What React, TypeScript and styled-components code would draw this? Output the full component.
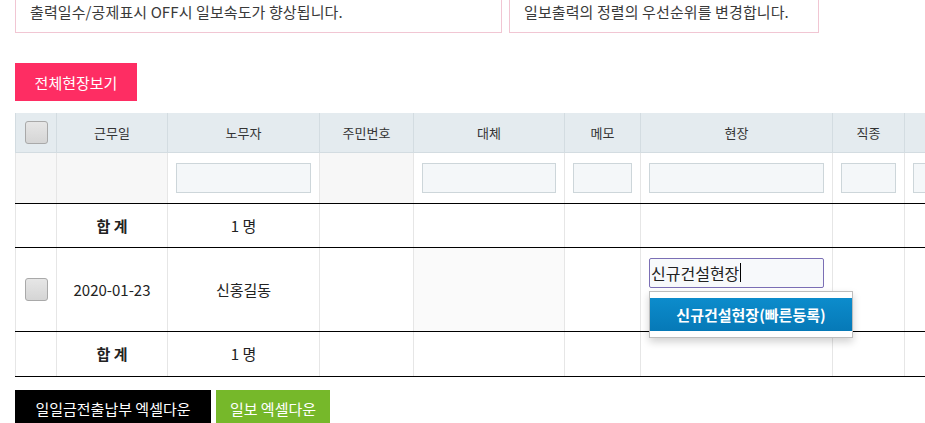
import React from "react";
import styled, { createGlobalStyle } from "styled-components";

const GlobalStyle = createGlobalStyle`
  html, body {
    margin: 0;
    padding: 0;
    background: #ffffff;
    overflow: hidden;
  }
  body {
    font-family: "Noto Sans CJK KR", "Noto Sans", sans-serif;
    color: #333333;
  }
  * { box-sizing: border-box; }
`;

const Page = styled.div`
  padding: 0 0 0 15px;
  width: 1200px;
`;

const NoticeRow = styled.div`
  display: flex;
  gap: 7px;
`;

const Notice = styled.div<{ $w: number }>`
  width: ${(p) => p.$w}px;
  height: 33px;
  border: 1px solid #f1c6d3;
  border-top: none;
  padding: 2px 0 0 14px;
  font-size: 15px;
  line-height: 19px;
  color: #3a3a3a;
  letter-spacing: 0.1px;
`;

const PinkButton = styled.button`
  display: block;
  margin-top: 30px;
  width: 122px;
  height: 38px;
  border: none;
  background: #fe2d63;
  color: #ffffff;
  font-family: inherit;
  font-size: 15px;
  padding: 0;
`;

const Table = styled.table`
  margin-top: 12px;
  border-collapse: collapse;
  table-layout: fixed;
  width: 1041px;
  font-size: 15px;
`;

const HeadCell = styled.th`
  height: 39px;
  background: #e4ebef;
  border: 1px solid #d3dce1;
  border-top: none;
  font-weight: normal;
  font-size: 13px;
  color: #333333;
  text-align: center;
  padding: 0;
`;

const FilterCell = styled.td<{ $empty?: boolean }>`
  height: 51px;
  background: ${(p) => (p.$empty ? "#f7f7f7" : "#ffffff")};
  border-left: 1px solid #e6e6e6;
  border-right: 1px solid #e6e6e6;
  border-bottom: 1px solid #000000;
  padding: 0 8px 0 8px;
`;

const FilterInput = styled.input`
  display: block;
  width: 100%;
  height: 30px;
  border: 1px solid #cdd6da;
  background: #f4f7f9;
  padding: 0 4px;
  font-family: inherit;
  font-size: 14px;
`;

const Cell = styled.td<{ $h: number; $bold?: boolean; $marked?: boolean; $top?: boolean }>`
  height: ${(p) => p.$h}px;
  border-left: 1px solid ${(p) => (p.$marked ? "#a0a0a0" : "#e6e6e6")};
  border-right: 1px solid #e6e6e6;
  border-bottom: 1px solid #000000;
  background: ${(p) => (p.$marked ? "#fafafa" : "#ffffff")};
  text-align: center;
  font-weight: ${(p) => (p.$bold ? 700 : 400)};
  color: #222222;
  padding: ${(p) => (p.$top ? "10px 8px 0 8px" : "0 9px")};
  vertical-align: ${(p) => (p.$top ? "top" : "middle")};
`;

const CheckBox = styled.span`
  display: inline-block;
  width: 23px;
  height: 23px;
  border: 1px solid #a9a9a9;
  border-radius: 3px;
  background: linear-gradient(#e6e6e6, #d5d5d5);
  vertical-align: middle;
`;

const SiteField = styled.div`
  position: relative;
  text-align: left;
`;

const SiteInput = styled.div`
  height: 30px;
  width: 175px;
  border: 1px solid #7b6fb5;
  border-radius: 2px;
  background: #f7f9fb;
  font-size: 16px;
  line-height: 28px;
  padding-left: 1px;
  color: #222222;
  display: flex;
  align-items: center;
`;

const Caret = styled.span`
  display: inline-block;
  width: 1px;
  height: 19px;
  background: #000000;
  margin-left: 1px;
`;

const Suggest = styled.div`
  position: absolute;
  left: 0;
  top: 33px;
  width: 204px;
  padding: 6px 0;
  background: #ffffff;
  border: 1px solid #bdbdbd;
  box-shadow: 0 4px 8px rgba(0, 0, 0, 0.18);
  z-index: 2;
`;

const SuggestItem = styled.div`
  height: 33px;
  line-height: 33px;
  background: linear-gradient(#0c8ccc, #0679b7);
  color: #ffffff;
  font-weight: 700;
  font-size: 15px;
  text-align: center;
`;

const ButtonRow = styled.div`
  display: flex;
  gap: 5px;
  margin-top: 13px;
`;

const ExportButton = styled.button<{ $bg: string; $w: number }>`
  width: ${(p) => p.$w}px;
  height: 38px;
  border: none;
  background: ${(p) => p.$bg};
  color: #ffffff;
  font-family: inherit;
  font-size: 15px;
  padding: 0;
`;

const widths = [41, 111, 152, 94, 151, 76, 192, 72, 152];
const headers = ["", "근무일", "노무자", "주민번호", "대체", "메모", "현장", "직종", ""];
const filterInputs = [false, false, true, false, true, true, true, true, true];

function SumRow({ h }: { h: number }) {
  return (
    <tr>
      <Cell $h={h} />
      <Cell $h={h} $bold>합 계</Cell>
      <Cell $h={h}>1 명</Cell>
      <Cell $h={h} />
      <Cell $h={h} />
      <Cell $h={h} />
      <Cell $h={h} />
      <Cell $h={h} />
      <Cell $h={h} />
    </tr>
  );
}

export default function App() {
  return (
    <>
      <GlobalStyle />
      <Page>
        <NoticeRow>
          <Notice $w={487}>출력일수/공제표시 OFF시 일보속도가 향상됩니다.</Notice>
          <Notice $w={310}>일보출력의 정렬의 우선순위를 변경합니다.</Notice>
        </NoticeRow>
        <PinkButton>전체현장보기</PinkButton>
        <Table>
          <colgroup>
            {widths.map((w, i) => (
              <col key={i} style={{ width: w }} />
            ))}
          </colgroup>
          <thead>
            <tr>
              {headers.map((h, i) => (
                <HeadCell key={i}>{i === 0 ? <CheckBox /> : h}</HeadCell>
              ))}
            </tr>
          </thead>
          <tbody>
            <tr>
              {filterInputs.map((has, i) => (
                <FilterCell key={i} $empty={!has}>
                  {has && <FilterInput readOnly />}
                </FilterCell>
              ))}
            </tr>
            <SumRow h={44} />
            <tr>
              <Cell $h={84}>
                <CheckBox />
              </Cell>
              <Cell $h={84}>2020-01-23</Cell>
              <Cell $h={84}>신홍길동</Cell>
              <Cell $h={84} />
              <Cell $h={84} $marked />
              <Cell $h={84} />
              <Cell $h={84} $top>
                <SiteField>
                  <SiteInput>
                    신규건설현장
                    <Caret />
                  </SiteInput>
                  <Suggest>
                    <SuggestItem>신규건설현장(빠른등록)</SuggestItem>
                  </Suggest>
                </SiteField>
              </Cell>
              <Cell $h={84} />
              <Cell $h={84} />
            </tr>
            <SumRow h={45} />
          </tbody>
        </Table>
        <ButtonRow>
          <ExportButton $bg="#000000" $w={196}>일일금전출납부 엑셀다운</ExportButton>
          <ExportButton $bg="#76b82a" $w={114}>일보 엑셀다운</ExportButton>
        </ButtonRow>
      </Page>
    </>
  );
}
